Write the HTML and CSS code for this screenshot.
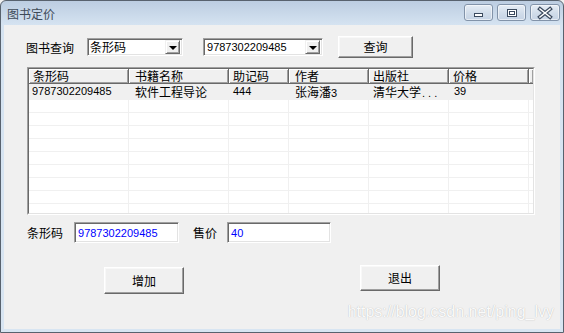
FILE: index.html
```html
<!DOCTYPE html>
<html lang="zh">
<head>
<meta charset="utf-8">
<title>图书定价</title>
<link rel="stylesheet" href="styles.css">
</head>
<body>
<div class="window">
  <div class="titlebar">
    <span class="title">图书定价</span>
    <div class="caption-btns">
      <span class="cap-btn">
        <svg width="27" height="15" viewBox="0 0 27 15"><rect x="9.5" y="8.5" width="8" height="3" fill="#fff" stroke="#3b4a5e"/></svg>
      </span>
      <span class="cap-btn">
        <svg width="27" height="15" viewBox="0 0 27 15"><rect x="9.5" y="4.5" width="9" height="7" fill="#fff" stroke="#3b4a5e"/><rect x="11.5" y="6.5" width="5" height="3" fill="none" stroke="#3b4a5e"/></svg>
      </span>
      <span class="cap-btn cap-close">
        <svg width="28" height="15" viewBox="0 0 28 15"><path d="M9 4 L19 12 M19 4 L9 12" stroke="#3b4a5e" stroke-width="4" stroke-linecap="square"/><path d="M9 4 L19 12 M19 4 L9 12" stroke="#fff" stroke-width="1.6" stroke-linecap="square"/></svg>
      </span>
    </div>
  </div>
  <div class="client">
    <div class="row query-row">
      <span class="label">图书查询</span>
      <div class="combo combo-type">
        <span class="combo-text">条形码</span>
        <span class="drop"><i class="tri"></i></span>
      </div>
      <div class="combo combo-value">
        <span class="combo-text num">9787302209485</span>
        <span class="drop"><i class="tri"></i></span>
      </div>
      <button class="btn btn-query">查询</button>
    </div>

    <div class="list">
      <div class="list-inner">
        <div class="lv-header">
          <span class="hc c1">条形码</span>
          <span class="hc c2">书籍名称</span>
          <span class="hc c3">助记码</span>
          <span class="hc c4">作者</span>
          <span class="hc c5">出版社</span>
          <span class="hc c6">价格</span>
          <span class="hc c7"></span>
        </div>
        <div class="lv-row first">
          <span class="dc c1 num">9787302209485</span>
          <span class="dc c2">软件工程导论</span>
          <span class="dc c3 num">444</span>
          <span class="dc c4">张海潘<span class="num">3</span></span>
          <span class="dc c5">清华大学<span class="dots">...</span></span>
          <span class="dc c6 num">39</span>
          <span class="dc c7"></span>
        </div>
        <div class="lv-row"><span class="dc c1"></span><span class="dc c2"></span><span class="dc c3"></span><span class="dc c4"></span><span class="dc c5"></span><span class="dc c6"></span><span class="dc c7"></span></div>
        <div class="lv-row"><span class="dc c1"></span><span class="dc c2"></span><span class="dc c3"></span><span class="dc c4"></span><span class="dc c5"></span><span class="dc c6"></span><span class="dc c7"></span></div>
        <div class="lv-row"><span class="dc c1"></span><span class="dc c2"></span><span class="dc c3"></span><span class="dc c4"></span><span class="dc c5"></span><span class="dc c6"></span><span class="dc c7"></span></div>
        <div class="lv-row"><span class="dc c1"></span><span class="dc c2"></span><span class="dc c3"></span><span class="dc c4"></span><span class="dc c5"></span><span class="dc c6"></span><span class="dc c7"></span></div>
        <div class="lv-row"><span class="dc c1"></span><span class="dc c2"></span><span class="dc c3"></span><span class="dc c4"></span><span class="dc c5"></span><span class="dc c6"></span><span class="dc c7"></span></div>
        <div class="lv-row"><span class="dc c1"></span><span class="dc c2"></span><span class="dc c3"></span><span class="dc c4"></span><span class="dc c5"></span><span class="dc c6"></span><span class="dc c7"></span></div>
        <div class="lv-row"><span class="dc c1"></span><span class="dc c2"></span><span class="dc c3"></span><span class="dc c4"></span><span class="dc c5"></span><span class="dc c6"></span><span class="dc c7"></span></div>
        <div class="lv-row"><span class="dc c1"></span><span class="dc c2"></span><span class="dc c3"></span><span class="dc c4"></span><span class="dc c5"></span><span class="dc c6"></span><span class="dc c7"></span></div>
        <div class="lv-row"><span class="dc c1"></span><span class="dc c2"></span><span class="dc c3"></span><span class="dc c4"></span><span class="dc c5"></span><span class="dc c6"></span><span class="dc c7"></span></div>
        <div class="lv-row"><span class="dc c1"></span><span class="dc c2"></span><span class="dc c3"></span><span class="dc c4"></span><span class="dc c5"></span><span class="dc c6"></span><span class="dc c7"></span></div>
      </div>
    </div>

    <div class="row field-row">
      <span class="label">条形码</span>
      <div class="field field-code"><span class="num blue">9787302209485</span></div>
      <span class="label label-price">售价</span>
      <div class="field field-price"><span class="num blue">40</span></div>
    </div>

    <div class="row action-row">
      <button class="btn btn-add">增加</button>
      <button class="btn btn-exit">退出</button>
    </div>

    <div class="watermark">https://blog.csdn.net/ping_lvy</div>
  </div>
</div>
</body>
</html>
```

FILE: styles.css
```css
* { box-sizing: border-box; }

html, body {
  margin: 0;
  padding: 0;
  width: 564px;
  height: 333px;
  overflow: hidden;
  background: #f0f0f0;
}

body {
  font-family: "Noto Sans CJK SC", "Liberation Sans", sans-serif;
  font-size: 12px;
  line-height: 14px;
  color: #000;
}

.window {
  width: 564px;
  height: 333px;
  border: 1px solid #58626e;
  border-radius: 6px 6px 0 0;
  background: linear-gradient(#bccde1, #d5e3f1 24px, #d8e5f2);
  display: flex;
  flex-direction: column;
}

.titlebar {
  height: 24px;
  display: flex;
  align-items: flex-start;
  flex: none;
}

.title {
  margin-top: 6px;
  margin-left: 6px;
  font-size: 12px;
  line-height: 14px;
  color: #3e4a58;
}

.caption-btns {
  margin-left: auto;
  margin-top: 3px;
  margin-right: 3px;
  display: flex;
  gap: 4px;
}

.cap-btn {
  width: 29px;
  height: 17px;
  border: 1px solid #8293a9;
  border-radius: 3px;
  background: linear-gradient(#e6edf5, #cfdbe9 60%, #c6d4e5);
  box-shadow: inset 0 0 0 1px rgba(255,255,255,0.55);
  display: block;
}

.cap-close { width: 30px; }

.cap-btn svg { display: block; }

.client {
  flex: 1;
  margin: 0 3px 3px 3px;
  background: #f0f0f0;
  position: relative;
  display: flex;
  flex-direction: column;
}

.row {
  display: flex;
  align-items: center;
  flex: none;
}

.num {
  font-family: "Liberation Sans", sans-serif;
  font-size: 11px;
}

/* query row */
.query-row {
  margin-top: 11px;
  height: 22px;
  padding-left: 22px;
}

.label {
  white-space: nowrap;
}

.query-row .label { margin-right: 13px; margin-top: 2px; }

.combo {
  height: 18px;
  border: 1px solid;
  border-color: #a0a0a0 #fff #fff #a0a0a0;
  box-shadow: inset 1px 1px #696969, inset -1px -1px #e3e3e3;
  padding: 1px;
  background: #fff;
  display: flex;
  align-items: center;
}

.combo-type { width: 96px; }
.combo-value { width: 120px; margin-left: 20px; }

.combo-text {
  flex: 1;
  padding-left: 2px;
  white-space: nowrap;
}

.combo-type .combo-text { padding-left: 1px; }

.drop {
  width: 15px;
  height: 14px;
  margin-right: 1px;
  background: #f0f0f0;
  border: 1px solid;
  border-color: #f0f0f0 #696969 #696969 #f0f0f0;
  box-shadow: inset 1px 1px #fff, inset -1px -1px #a0a0a0;
  display: flex;
  align-items: center;
  justify-content: center;
  flex: none;
}

.tri {
  width: 0;
  height: 0;
  border-left: 4px solid transparent;
  border-right: 4px solid transparent;
  border-top: 4px solid #000;
  margin-top: 1px;
}

.btn {
  font-family: "Noto Sans CJK SC", sans-serif;
  font-size: 12px;
  line-height: 14px;
  color: #000;
  background: #f0f0f0;
  border: 1px solid;
  border-color: #fff #696969 #696969 #fff;
  box-shadow: inset -1px -1px #a0a0a0, inset 1px 1px #f8f8f8;
  padding: 0;
  margin: 0;
  display: flex;
  align-items: center;
  justify-content: center;
}

.btn-query {
  width: 75px;
  height: 22px;
  margin-left: 15px;
}

/* list view */
.list {
  margin-top: 9px;
  margin-left: 23px;
  width: 508px;
  height: 148px;
  border: 1px solid;
  border-color: #a0a0a0 #fff #fff #a0a0a0;
  flex: none;
}

.list-inner {
  height: 100%;
  border: 1px solid;
  border-color: #696969 #e3e3e3 #e3e3e3 #696969;
  background: #fff;
  overflow: hidden;
}

.lv-header {
  display: flex;
  height: 15px;
}

.hc {
  height: 15px;
  background: #f0f0f0;
  border-right: 1px solid #696969;
  border-bottom: 1px solid #696969;
  box-shadow: inset 1px 1px #fff, inset -1px -1px #a0a0a0;
  padding-left: 4px;
  line-height: 14px;
  white-space: nowrap;
  flex: none;
}

.c1 { width: 100px; }
.c2 { width: 100px; padding-left: 6px; }
.c3 { width: 60px; }
.c4 { width: 80px; padding-left: 6px; }
.c5 { width: 80px; }
.c6 { width: 80px; }
.hc.c7, .dc.c7 { flex: 1; }

.lv-row {
  display: flex;
  height: 13px;
}

.lv-row.first {
  height: 16px;
  background: #f0f0f0;
}

.dc {
  border-right: 1px solid #f0f0f0;
  border-bottom: 1px solid #f0f0f0;
  padding-left: 4px;
  white-space: nowrap;
  line-height: 15px;
  flex: none;
}

.dc.c1 { padding-left: 3px; }
.dc.c2 { padding-left: 6px; }
.dc.c4 { padding-left: 6px; }
.dc.c6 { padding-left: 5px; }

.lv-row.first .dc { border-color: #f0f0f0; }

.dots {
  font-family: "Liberation Sans", sans-serif;
  font-size: 11px;
  letter-spacing: 3px;
  margin-left: 1px;
}

/* field row */
.field-row {
  margin-top: 7px;
  height: 21px;
  padding-left: 23px;
}

.field {
  height: 21px;
  border: 1px solid;
  border-color: #a0a0a0 #fff #fff #a0a0a0;
  box-shadow: inset 1px 1px #696969, inset -1px -1px #e3e3e3;
  background: #fff;
  padding: 2px 3px;
  display: flex;
  align-items: center;
}

.field-code { width: 105px; margin-left: 11px; }
.label-price { margin-left: 14px; }
.field-price { width: 104px; margin-left: 10px; }

.blue { color: #0000ff; }

/* action row */
.action-row {
  margin-top: 22px;
  align-items: flex-start;
}

.btn-add {
  width: 80px;
  height: 27px;
  margin-left: 100px;
  margin-top: 2px;
}

.btn-exit {
  width: 80px;
  height: 26px;
  margin-left: 176px;
}

.watermark {
  position: absolute;
  right: 6px;
  top: 278px;
  font-family: "Liberation Sans", sans-serif;
  font-size: 16px;
  line-height: 18px;
  color: rgba(255, 255, 255, 0.95);
  text-shadow: 0 0 1px rgba(0, 0, 0, 0.28);
  white-space: nowrap;
}
```
